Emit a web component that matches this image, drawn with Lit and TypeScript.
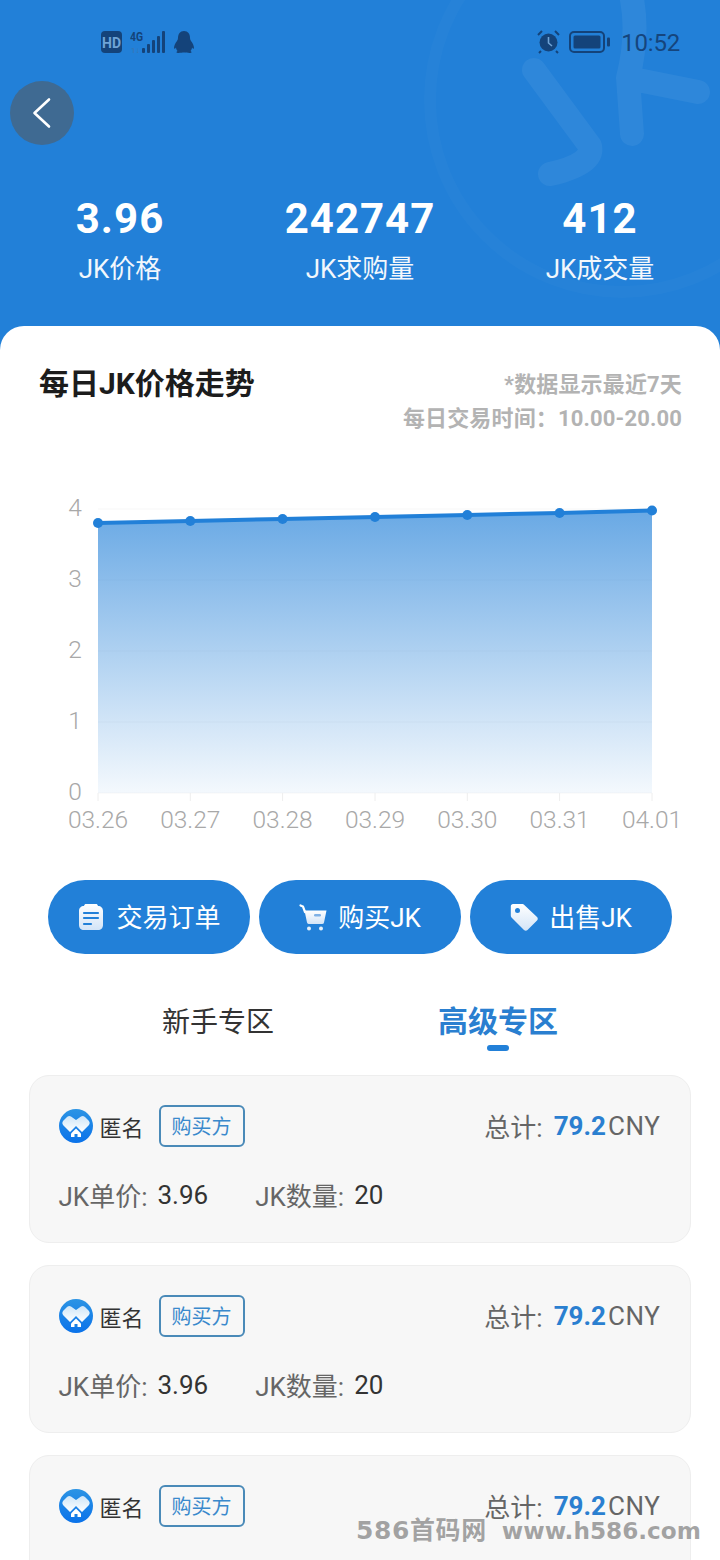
import { LitElement, html, css, svg } from "lit";
import { customElement } from "lit/decorators.js";

const FONT = `Roboto, "Noto Sans CJK SC", sans-serif`;
const days = ["03.26", "03.27", "03.28", "03.29", "03.30", "03.31", "04.01"];
const ys = [523, 521, 519, 517, 515, 513, 510.5];
const xs = [98, 190.3, 282.6, 375, 467.3, 559.6, 652];

@customElement("app-root")
export class AppRoot extends LitElement {
  static styles = css`
    :host { display: block; width: 720px; height: 1560px; overflow: hidden; position: relative; background: #fff; font-family: ${css([FONT] as any)}; }
    .header { position: relative; height: 350px; background: #2280d8; color: #fff; overflow: hidden; }
    .mark { position: absolute; left: 0; top: 0; }
    .status { position: relative; height: 81px; display: flex; justify-content: space-between; align-items: center; padding: 2px 40px 0 101px; box-sizing: border-box; color: #14437a; }
    .status-left, .status-right { display: flex; align-items: center; }
    .status-left { gap: 8px; }
    .status-right { gap: 9px; }
    .time { font-size: 24px; margin: 2px 0 0 1px; letter-spacing: -0.2px; color: #15457d; }
    .back { position: relative; width: 64px; height: 64px; margin-left: 10px; border-radius: 50%; background: #3f6a92; display: flex; align-items: center; justify-content: center; }
    .stats { position: relative; display: grid; grid-template-columns: repeat(3, 240px); margin-top: 50px; text-align: center; }
    .value { font-size: 42px; line-height: 48px; font-weight: 700; letter-spacing: 1px; }
    .label { font-size: 26px; line-height: 36px; margin-top: 8px; color: #f2f7fc; }
    .sheet { position: relative; margin-top: -24px; background: #fff; border-radius: 24px 24px 0 0; }
    .head { display: flex; justify-content: space-between; padding: 42px 38px 0 39px; }
    .title { font-size: 30px; line-height: 32px; font-weight: 700; color: #1c1c1c; }
    .notes { text-align: right; font-size: 22px; line-height: 34px; font-weight: 700; color: #b3b3b3; letter-spacing: 0.15px; }
    .chart { display: block; margin-top: 44px; }
    .chart text { font-family: ${css([FONT] as any)}; font-size: 24.5px; fill: #a8a8a8; font-weight: 300; }
    .actions { display: flex; gap: 9px; margin-top: 40px; padding-left: 48px; }
    .action { width: 202px; height: 74px; border-radius: 37px; background: #2280d8; color: #fff; display: flex; align-items: center; justify-content: center; gap: 11px; font-size: 26px; }
    .action span { margin-bottom: 4px; }
    .tabs { display: grid; grid-template-columns: 280px 280px; height: 121px; padding: 48px 0 0 78px; box-sizing: border-box; }
    .tab { display: flex; flex-direction: column; align-items: center; }
    .tab span { font-size: 28px; line-height: 40px; color: #333; padding-top: 1px; }
    .tab.on span { font-size: 30px; font-weight: 700; color: #2a7fd0; padding-top: 0; }
    .bar { width: 22px; height: 6px; border-radius: 3px; background: #2280d8; margin-top: 3px; }
    .cards { display: flex; flex-direction: column; gap: 22px; padding: 0 29px; }
    .card { height: 168px; flex: none; box-sizing: border-box; border: 1.5px solid #eeeeee; border-radius: 20px; background: #f7f7f7; padding: 28.5px 29.5px 0 28.5px; }
    .row { display: flex; align-items: center; justify-content: space-between; height: 42px; }
    .who { display: flex; align-items: center; }
    .name { font-size: 22px; color: #333; margin-left: 7px; }
    .tag { width: 86px; height: 42px; box-sizing: border-box; border: 2px solid #4a8ab8; border-radius: 6px; margin-left: 15px; color: #3a89cc; font-size: 20px; display: flex; align-items: center; justify-content: center; }
    .total { font-size: 26px; color: #666; display: flex; align-items: center; }
    .total b { font-size: 26px; color: #2a7fd0; margin-left: 11px; }
    .total i { font-style: normal; font-size: 26px; margin-left: 2px; letter-spacing: 0.6px; }
    .meta { display: flex; align-items: center; height: 36px; margin-top: 30px; font-size: 26px; color: #666; }
    .meta b { font-weight: 400; color: #333; margin-left: 10px; }
    .meta .second { margin-left: 47px; }
    .wm { position: absolute; left: 356px; top: 1514px; display: flex; align-items: center; font-family: "DejaVu Sans", "Noto Sans CJK SC", sans-serif; line-height: 34px; font-weight: 700; color: rgba(130,130,130,0.72); white-space: pre; }
    .wm-a { font-size: 25px; letter-spacing: 0.6px; }
    .wm-b { font-size: 23.2px; margin-left: 15px; }
  `;

  private bag() {
    return svg`<defs><linearGradient id="ig" x1="0" y1="0" x2="0" y2="1"><stop offset="0" stop-color="#fff"/><stop offset="1" stop-color="#d3e4f7"/></linearGradient></defs>`;
  }

  private card(full = true) {
    return html`<div class="card">
      <div class="row">
        <div class="who">
          <svg width="34" height="34" viewBox="0 0 34 34">
            <defs><linearGradient id="av" x1="0" y1="0" x2="0" y2="1"><stop offset="0" stop-color="#2c94e4"/><stop offset="1" stop-color="#0a72ea"/></linearGradient>
            <linearGradient id="hv" x1="0" y1="0" x2="0" y2="1"><stop offset="0" stop-color="#cfe6f8"/><stop offset="1" stop-color="#ffffff"/></linearGradient></defs>
            <circle cx="17" cy="17" r="17" fill="url(#av)"/>
            <path d="M17 11 22 7.500Q24 6.500 26 8L30 12Q31.500 14 30 16L23 23 17 17 11 23 4 16Q2.500 14 4 12L8 8Q10 6.500 12 7.500Z" fill="url(#hv)"/>
            <path d="M17 19.500 22 24.500V28H12V24.500Z" fill="#fff"/><rect x="15.500" y="25" width="3" height="3" fill="#1a80e4"/>
          </svg>
          <span class="name">匿名</span>
          <span class="tag">购买方</span>
        </div>
        <div class="total">总计:<b>79.2</b><i>CNY</i></div>
      </div>
      ${full ? html`<div class="meta"><span>JK单价:</span><b>3.96</b><span class="second">JK数量:</span><b>20</b></div>` : ""}
    </div>`;
  }

  render() {
    const line = xs.map((x, i) => `${x},${ys[i]}`).join(" ");
    return html`
      <div class="header">
        <svg class="mark" width="720" height="350" viewBox="0 0 720 350" fill="none">
          <circle cx="622" cy="100" r="192" stroke="#fff" stroke-opacity="0.018" stroke-width="12"/>
          <g stroke="#fff" stroke-opacity="0.055" stroke-width="24" stroke-linecap="round" stroke-linejoin="round">
            <path d="M534 70 L590 146 Q594 164 550 174"/>
            <path d="M630 -10 Q640 30 628 78 L698 92 M628 78 L632 134"/>
          </g>
        </svg>
        <div class="status">
          <div class="status-left">
            <svg width="21" height="22" viewBox="0 0 21 22"><rect width="21" height="22" rx="4" fill="#14437a"/><text x="10.500" y="16.500" text-anchor="middle" font-family="Roboto" font-weight="700" font-size="14" fill="#6fa3d6">HD</text></svg>
            <svg width="36" height="24" viewBox="0 0 36 24">
              <text x="0" y="11" font-family="Roboto" font-weight="700" font-size="13" textLength="13" lengthAdjust="spacingAndGlyphs" fill="#14437a">4G</text>
              <text x="1" y="23" font-family="Roboto" font-size="8" fill="#3d74ad">1↓</text>
              <rect x="12" y="18" width="3" height="5" rx="1" fill="#14437a"/><rect x="17" y="14" width="3" height="9" rx="1" fill="#14437a"/><rect x="22" y="10" width="3" height="13" rx="1" fill="#14437a"/><rect x="27" y="6" width="3" height="17" rx="1" fill="#14437a"/><rect x="32" y="1" width="3" height="22" rx="1" fill="#14437a"/>
            </svg>
            <svg width="22" height="24" viewBox="0 0 22 24" style="margin-left:-1px"><path d="M11 1c4 0 6 3 6 7 0 1 .3 2 1 3 1.500 2 3 4.500 3 7 0 1-1 1-2-.5 0 1.500-.8 2.800-1.500 3.500 1 .5 1.500 1.300.5 1.800-1.500.6-5-.2-7-.2s-5.500.8-7 .2c-1-.5-.5-1.300.5-1.800C3.800 20.300 3 19 3 17.500 2 19 1 19 1 18c0-2.500 1.500-5 3-7 .7-1 1-2 1-3 0-4 2-7 6-7Z" fill="#14437a"/></svg>
          </div>
          <div class="status-right">
            <svg width="23" height="24" viewBox="0 0 23 24"><circle cx="11.500" cy="12.500" r="9" fill="#14437a"/><path d="M11.500 7v6l3.500 3" stroke="#6fa3d6" stroke-width="1.600" fill="none"/><path d="M1 5l4-4M22 5l-4-4M4 21l-2 2M19 21l2 2" stroke="#14437a" stroke-width="2"/></svg>
            <svg width="42" height="22" viewBox="0 0 42 22"><rect x="1" y="1" width="34" height="20" rx="4" fill="none" stroke="#14437a" stroke-width="2"/><rect x="4.500" y="4.500" width="27" height="13" rx="1.500" fill="#14437a"/><rect x="38" y="6.500" width="3" height="9" rx="1" fill="#14437a"/></svg>
            <span class="time">10:52</span>
          </div>
        </div>
        <div class="back">
          <svg width="24" height="32" viewBox="0 0 24 32" fill="none"><path d="M18 2.500 3.500 16 18 29.500" stroke="#fff" stroke-width="2.600" stroke-linecap="round" stroke-linejoin="round" transform="translate(1 0)"/></svg>
        </div>
        <div class="stats">
          <div><div class="value">3.96</div><div class="label">JK价格</div></div>
          <div><div class="value">242747</div><div class="label">JK求购量</div></div>
          <div><div class="value">412</div><div class="label">JK成交量</div></div>
        </div>
      </div>
      <div class="sheet">
        <div class="head">
          <div class="title">每日JK价格走势</div>
          <div class="notes">*数据显示最近7天<br />每日交易时间：10.00-20.00</div>
        </div>
        <svg class="chart" width="720" height="360" viewBox="0 480 720 360">
          <defs><linearGradient id="area" x1="0" y1="510" x2="0" y2="793" gradientUnits="userSpaceOnUse"><stop offset="0" stop-color="#2280d8" stop-opacity="0.68"/><stop offset="1" stop-color="#2280d8" stop-opacity="0.05"/></linearGradient></defs>
          ${[509, 580, 651, 722, 793].map((y) => svg`<line x1="98" x2="652" y1=${y} y2=${y} stroke="#f7f7f7" stroke-width="1"/>`)}
          ${xs.map((x) => svg`<line x1=${x} x2=${x} y1="793" y2="801" stroke="#eeeeee" stroke-width="1"/>`)}
          ${["4", "3", "2", "1", "0"].map((t, i) => svg`<text x="75" y=${516 + i * 71} text-anchor="middle">${t}</text>`)}
          ${days.map((d, i) => svg`<text x=${xs[i]} y="828" text-anchor="middle">${d}</text>`)}
          <polygon points="98,793 ${line} 652,793" fill="url(#area)"/>
          <polyline points=${line} fill="none" stroke="#2280d8" stroke-width="4"/>
          ${xs.map((x, i) => svg`<circle cx=${x} cy=${ys[i]} r="5" fill="#2280d8"/>`)}
        </svg>
        <div class="actions">
          <div class="action">
            <svg width="28" height="28" viewBox="0 0 28 28">${this.bag()}<path d="M9 1h10c1 0 1.500.6 2 2 3 0 5 2 5 5v14c0 3-2 5-5 5H7c-3 0-5-2-5-5V8c0-3 2-5 5-5 .5-1.400 1-2 2-2Z" fill="url(#ig)"/><path d="M7 10h14M7 15h14M7 21h7" stroke="#2280d8" stroke-width="2.200" stroke-linecap="round"/></svg>
            <span>交易订单</span>
          </div>
          <div class="action">
            <svg width="28" height="28" viewBox="0 0 28 28">${this.bag()}<path d="M1.500 2.500 4 3.500 6 9" stroke="#fff" stroke-width="2.200" fill="none" stroke-linecap="round"/><path d="M5.500 7.500H27.500L25 19.500Q24.800 21 23 21H10Q8.500 21 8 19.500Z" fill="url(#ig)"/><rect x="15" y="11" width="7" height="2.400" rx="1.200" fill="#7fb1e6"/><circle cx="10" cy="25.500" r="2" fill="#e6f0fa"/><circle cx="22" cy="25.500" r="2" fill="#e6f0fa"/></svg>
            <span>购买JK</span>
          </div>
          <div class="action">
            <svg width="28" height="28" viewBox="0 0 28 28">${this.bag()}<path d="M3 1h9c1 0 1.600.3 2.300 1L27 14c1 1 1 2.500 0 3.500L17.500 27c-1 1-2.500 1-3.500 0L1.500 14.500C1 14 .8 13.300.8 12.500V3.200C.8 2 1.800 1 3 1Z" fill="url(#ig)"/><circle cx="7.500" cy="7.500" r="2.500" fill="#2280d8"/></svg>
            <span>出售JK</span>
          </div>
        </div>
        <div class="tabs">
          <div class="tab"><span>新手专区</span></div>
          <div class="tab on"><span>高级专区</span><div class="bar"></div></div>
        </div>
        <div class="cards">${this.card()}${this.card()}${this.card(false)}</div>
      </div>
      <div class="wm"><span class="wm-a">586首码网</span><span class="wm-b">www.h586.com</span></div>
    `;
  }
}
